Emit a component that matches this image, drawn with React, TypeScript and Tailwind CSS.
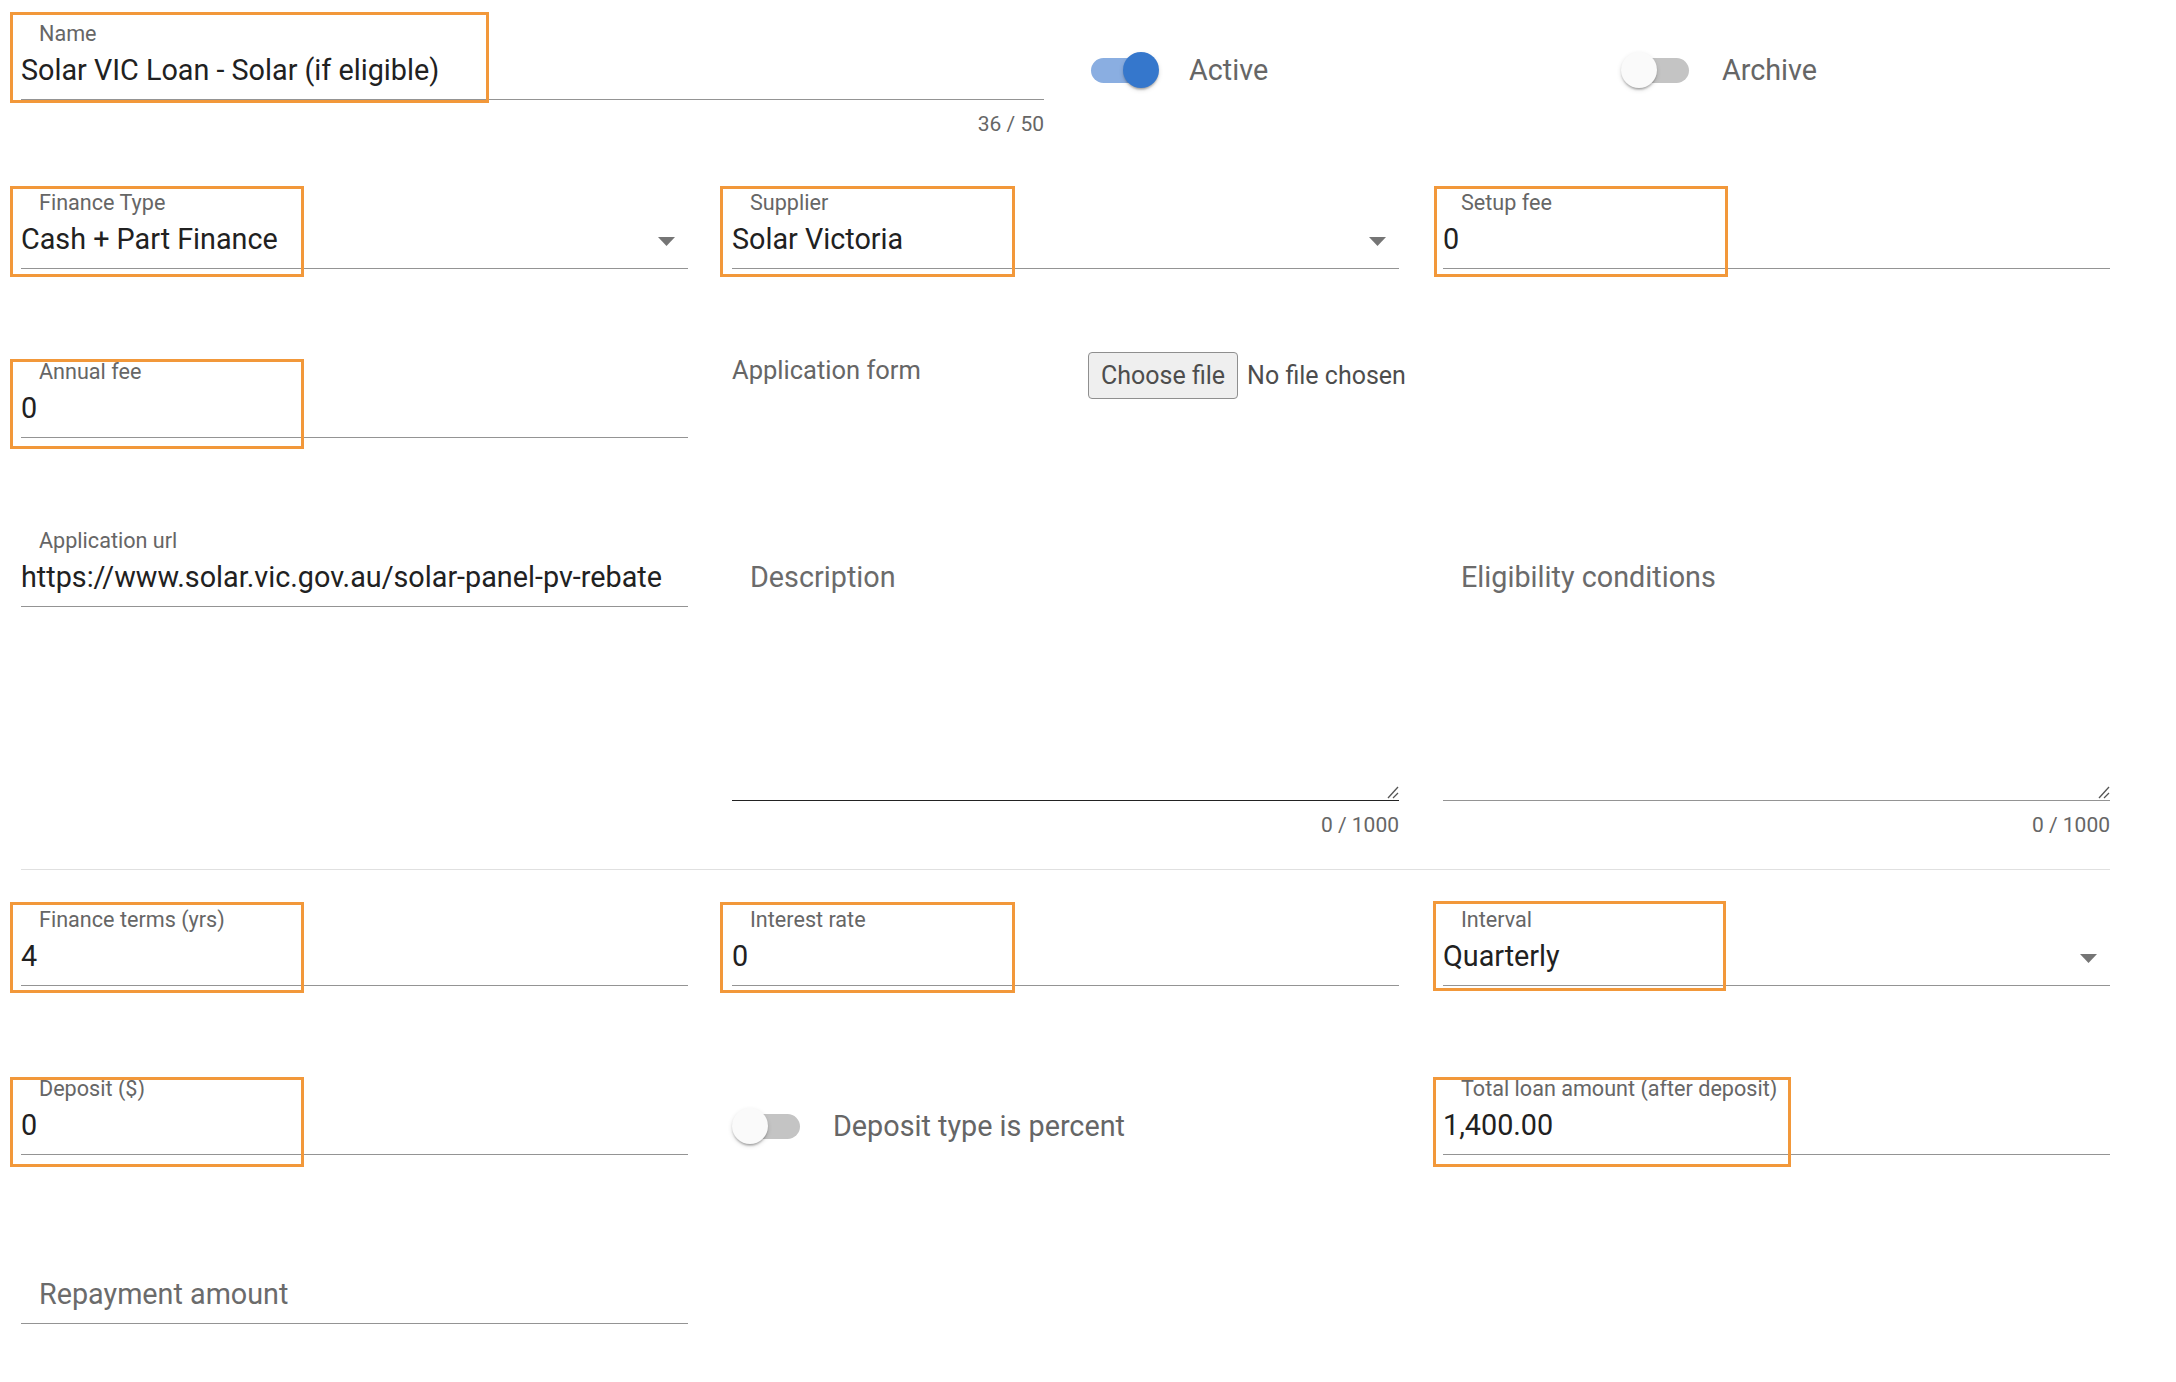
import React from 'react';

type FieldProps = {
  label?: string;
  value?: string;
  placeholder?: string;
  select?: boolean;
  counter?: string;
  // classes that place the orange annotation box
  box?: string;
};

function Arrow() {
  return (
    <svg className="absolute right-[13px] top-[15px]" width="17" height="9" viewBox="0 0 17 9">
      <polygon points="0,0 17,0 8.5,9" fill="#757575" />
    </svg>
  );
}

function Field({ label, value, placeholder, select, counter, box }: FieldProps) {
  return (
    <div className="relative">
      <div className="h-[44px] whitespace-nowrap pt-[24px] pl-[18px] text-[21.6px] leading-[20px] text-[#666]">{label}</div>
      <div className="relative mt-[9px] border-b border-[#949494] pb-[12px]">
        {value !== undefined ? (
          <div className="h-[34px] whitespace-nowrap text-[28.75px] leading-[34px] text-[#212121]">{value}</div>
        ) : (
          <div className="h-[34px] whitespace-nowrap pl-[18px] text-[28.75px] leading-[34px] text-[#6b6b6b]">{placeholder}</div>
        )}
        {select && <Arrow />}
      </div>
      {counter && <div className="mt-[12px] text-right text-[21px] leading-[24px] text-[#666]">{counter}</div>}
      {box && <div className={`pointer-events-none absolute border-[3.5px] border-[#f2983a] ${box}`} />}
    </div>
  );
}

function TextArea({ placeholder, dark }: { placeholder: string; dark?: boolean }) {
  return (
    <div className="relative">
      <div className="h-[44px]" />
      <div
        className={
          dark
            ? 'relative mt-[9px] h-[241px] border-b-[1.5px] border-[#222]'
            : 'relative mt-[9px] h-[241px] border-b border-[#949494]'
        }
      >
        <div className="whitespace-nowrap pl-[18px] text-[28.75px] leading-[34px] text-[#6b6b6b]">{placeholder}</div>
        <svg className="absolute right-0 bottom-[1px]" width="14" height="14" viewBox="0 0 14 14">
          <line x1="13" y1="2" x2="3" y2="13" stroke="#555" strokeWidth="1.3" />
          <line x1="13" y1="8" x2="8" y2="13" stroke="#555" strokeWidth="1.3" />
        </svg>
      </div>
      <div className="mt-[12px] text-right text-[21px] leading-[24px] text-[#666]">0 / 1000</div>
    </div>
  );
}

function Toggle({ on }: { on?: boolean }) {
  return (
    <div className={`relative h-[25px] w-[63px] shrink-0 rounded-full ${on ? 'bg-[#8aaee1]' : 'bg-[#c4c4c4]'}`}>
      <div
        className={`absolute top-1/2 h-[36px] w-[36px] -translate-y-1/2 rounded-full shadow-[0_3px_2px_-2px_rgba(0,0,0,0.2),0_2px_2px_0_rgba(0,0,0,0.14),0_2px_5px_0_rgba(0,0,0,0.12)] ${
          on ? 'left-[32px] bg-[#3577cc]' : 'left-[-5px] bg-[#fafafa]'
        }`}
      />
    </div>
  );
}

export default function App() {
  return (
    <div className="min-h-screen bg-white font-[Roboto,sans-serif]">
      <div className="w-[2110px] pl-[21px]">
        {/* name + toggles */}
        <div className="flex h-[169px] items-start">
          <div className="w-[1023px] shrink-0">
            <Field
              label="Name"
              value="Solar VIC Loan - Solar (if eligible)"
              counter="36 / 50"
              box="left-[-11px] top-[12px] h-[91px] w-[479px]"
            />
          </div>
          <div className="ml-[47px] mt-[52px] flex h-[36px] w-[535px] shrink-0 items-center">
            <Toggle on />
            <span className="ml-[35px] text-[28.75px] leading-[34px] text-[#666]">Active</span>
          </div>
          <div className="mt-[52px] flex h-[36px] items-center">
            <Toggle />
            <span className="ml-[33px] text-[28.75px] leading-[34px] text-[#666]">Archive</span>
          </div>
        </div>

        <div className="grid h-[169px] grid-cols-3 gap-x-[44px]">
          <Field label="Finance Type" value="Cash + Part Finance" select box="left-[-11px] top-[17px] h-[91px] w-[294px]" />
          <Field label="Supplier" value="Solar Victoria" select box="left-[-12px] top-[17px] h-[91px] w-[295px]" />
          <Field label="Setup fee" value="0" box="left-[-9px] top-[17px] h-[91px] w-[294px]" />
        </div>

        <div className="grid h-[169px] grid-cols-3 gap-x-[44px]">
          <Field label="Annual fee" value="0" box="left-[-11px] top-[21px] h-[90px] w-[294px]" />
          <div className="flex items-start">
            <div className="mt-[17px] w-[356px] shrink-0 text-[25.5px] leading-[30px] text-[#666]">Application form</div>
            <div className="mt-[14px] flex items-center whitespace-nowrap text-[25px] text-[#4d4d4d]">
              <span className="flex h-[47px] items-center rounded-[4px] border border-[#8f8f8f] bg-[#efefef] px-[12px]">
                Choose file
              </span>
              <span className="ml-[9px]">No file chosen</span>
            </div>
          </div>
          <div />
        </div>

        <div className="grid h-[362px] grid-cols-3 gap-x-[44px]">
          <Field label="Application url" value="https://www.solar.vic.gov.au/solar-panel-pv-rebate" />
          <TextArea placeholder="Description" dark />
          <TextArea placeholder="Eligibility conditions" />
        </div>

        <div className="h-px bg-[#e0e0e0]" />

        <div className="mt-[16px] grid h-[169px] grid-cols-3 gap-x-[44px]">
          <Field label="Finance terms (yrs)" value="4" box="left-[-11px] top-[16px] h-[91px] w-[294px]" />
          <Field label="Interest rate" value="0" box="left-[-12px] top-[16px] h-[91px] w-[295px]" />
          <Field label="Interval" value="Quarterly" select box="left-[-10px] top-[15px] h-[90px] w-[293px]" />
        </div>

        <div className="grid h-[169px] grid-cols-3 gap-x-[44px]">
          <Field label="Deposit ($)" value="0" box="left-[-11px] top-[22px] h-[90px] w-[294px]" />
          <div className="mt-[53px] flex h-[36px] items-center pl-[5px]">
            <Toggle />
            <span className="ml-[33px] whitespace-nowrap text-[28.75px] leading-[34px] text-[#666]">Deposit type is percent</span>
          </div>
          <Field
            label="Total loan amount (after deposit)"
            value="1,400.00"
            box="left-[-10px] top-[22px] h-[90px] w-[358px]"
          />
        </div>

        <div className="grid h-[169px] grid-cols-3 gap-x-[44px]">
          <Field placeholder="Repayment amount" />
        </div>
      </div>
    </div>
  );
}
